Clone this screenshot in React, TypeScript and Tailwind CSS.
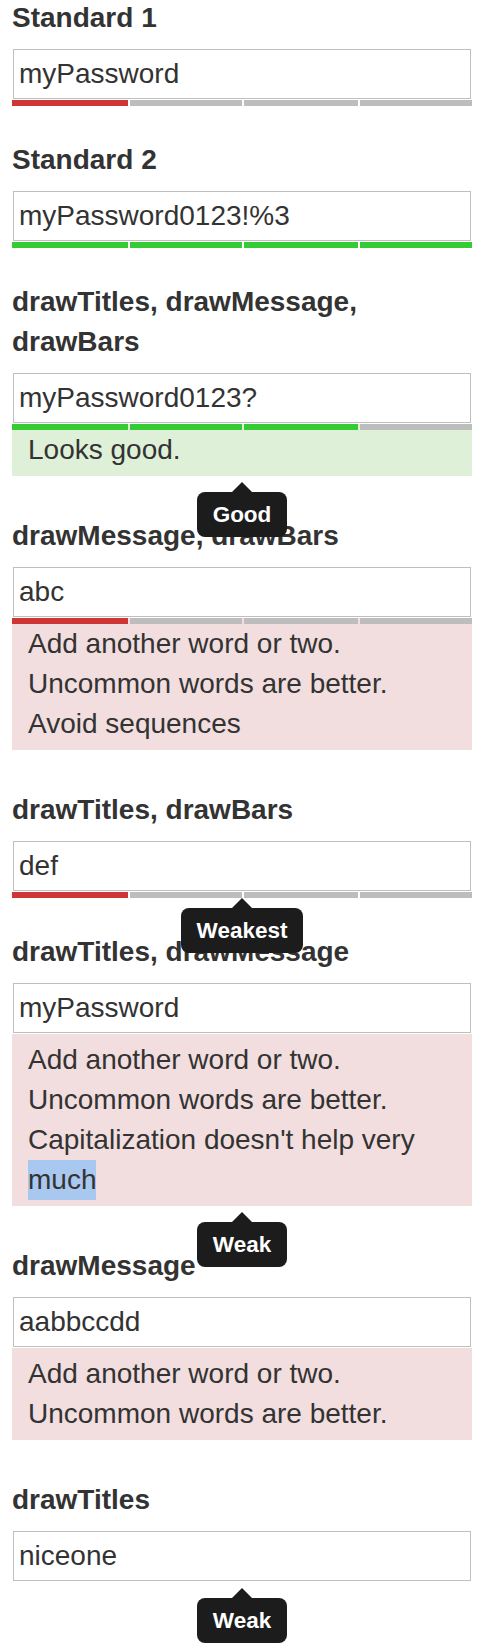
import React from 'react';

type Level = 'red' | 'green' | 'gray';

const barColors: Record<Level, string> = {
    red: 'bg-[#d03535]',
    green: 'bg-[#33cc33]',
    gray: 'bg-[#bdbdbd]',
};

const barWidths = ['w-[116px]', 'w-[112px]', 'w-[114px]', 'w-[112px]'];

function Bars({ levels, overlay }: { levels: Level[]; overlay?: boolean }) {
    return (
        <div className={`flex gap-[2px] h-[6px] ${overlay ? 'absolute top-0 left-0 right-0' : 'mt-px'}`}>
            {levels.map((l, i) => (
                <div key={i} className={`${barWidths[i]} h-full ${barColors[l]}`} />
            ))}
        </div>
    );
}

function Tooltip({ text }: { text: string }) {
    return (
        <div className="absolute top-full left-0 right-0 z-10 flex flex-col items-center">
            <div className="w-0 h-0 border-x-[10px] border-x-transparent border-b-[10px] border-b-[#1c1c1c]" />
            <div className="bg-[#1c1c1c] text-white font-bold text-[22.5px] leading-[33px] px-[16px] py-[6px] rounded-[8px]">
                {text}
            </div>
        </div>
    );
}

type Section = {
    title: string;
    value: string;
    bars?: Level[];
    message?: { tone: 'good' | 'bad'; lines: React.ReactNode[] };
    tooltip?: string;
    emptyZone?: boolean;
};

const R: Level = 'red';
const G: Level = 'green';
const X: Level = 'gray';

const sections: Section[] = [
    { title: 'Standard 1', value: 'myPassword', bars: [R, X, X, X] },
    { title: 'Standard 2', value: 'myPassword0123!%3', bars: [G, G, G, G] },
    {
        title: 'drawTitles, drawMessage, drawBars',
        value: 'myPassword0123?',
        bars: [G, G, G, X],
        message: { tone: 'good', lines: ['Looks good.'] },
        tooltip: 'Good',
    },
    {
        title: 'drawMessage, drawBars',
        value: 'abc',
        bars: [R, X, X, X],
        message: {
            tone: 'bad',
            lines: ['Add another word or two.', 'Uncommon words are better.', 'Avoid sequences'],
        },
    },
    { title: 'drawTitles, drawBars', value: 'def', bars: [R, X, X, X], tooltip: 'Weakest' },
    {
        title: 'drawTitles, drawMessage',
        value: 'myPassword',
        message: {
            tone: 'bad',
            lines: [
                'Add another word or two.',
                'Uncommon words are better.',
                <>
                    Capitalization doesn't help very{' '}
                    <span className="inline-block bg-[#a9c8ef] leading-[40px]">much</span>
                </>,
            ],
        },
        tooltip: 'Weak',
    },
    {
        title: 'drawMessage',
        value: 'aabbccdd',
        message: { tone: 'bad', lines: ['Add another word or two.', 'Uncommon words are better.'] },
    },
    { title: 'drawTitles', value: 'niceone', tooltip: 'Weak', emptyZone: true },
];

export default function App() {
    return (
        <div
            className="-mt-[2px] pl-[12px] pb-[30px] w-[472px] text-[#333] text-[28px] leading-[40px]"
            style={{ fontFamily: '"Liberation Sans", Arial, sans-serif' }}
        >
            {sections.map((s, idx) => (
                <div key={idx} className="mb-[34px]">
                    <div className="font-bold mb-[11px]">{s.title}</div>
                    <div className="relative flex flex-col">
                        <input
                            readOnly
                            defaultValue={s.value}
                            className="block mx-px w-[458px] h-[50px] border border-[#bfbfbf] bg-white pl-[5px] text-[28px] text-[#333] outline-none"
                        />
                        {s.message ? (
                            <div
                                className={`relative mt-px pt-[6px] pb-[6px] pl-[16px] pr-[16px] mb-[6px] ${
                                    s.message.tone === 'good' ? 'bg-[#dff0d8]' : 'bg-[#f2dede]'
                                }`}
                            >
                                {s.bars && <Bars levels={s.bars} overlay />}
                                {s.message.lines.map((line, i) => (
                                    <div key={i}>{line}</div>
                                ))}
                            </div>
                        ) : s.bars ? (
                            <Bars levels={s.bars} />
                        ) : s.emptyZone ? (
                            <div className="mt-px h-[6px]" />
                        ) : null}
                        {s.tooltip && <Tooltip text={s.tooltip} />}
                    </div>
                </div>
            ))}
        </div>
    );
}
